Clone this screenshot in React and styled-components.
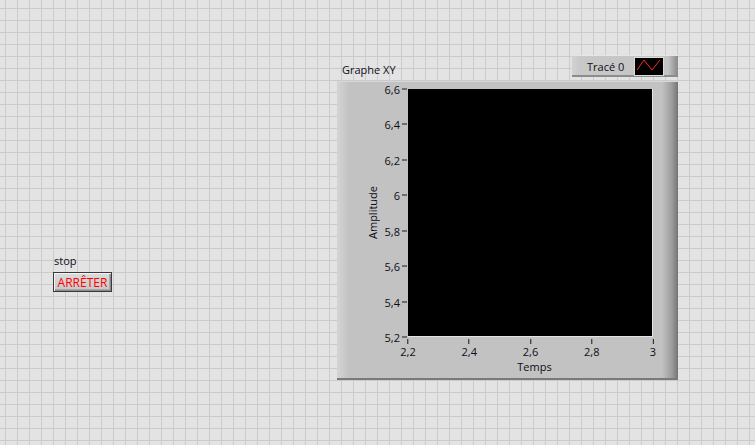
import React from "react";
import styled, { createGlobalStyle } from "styled-components";

const Global = createGlobalStyle`
  html, body { margin: 0; padding: 0; }
  body {
    background-color: #e3e3e3;
    background-image:
      linear-gradient(to right, #cbcbcb 1px, transparent 1px),
      linear-gradient(to bottom, #cbcbcb 1px, transparent 1px);
    background-size: 12px 12px;
    background-position: 5px 8px;
    font-family: "Open Sans", "Noto Sans", sans-serif;
    font-size: 11px;
    color: #0e0e18;
  }
`;

const Canvas = styled.div`
  position: relative;
  width: 755px;
  height: 445px;
  overflow: hidden;
`;

const Control = styled.div`
  position: absolute;
  left: ${(p) => p.$x}px;
  top: ${(p) => p.$y}px;
  display: flex;
  flex-direction: column;
`;

const Label = styled.div`
  line-height: 15px;
  white-space: nowrap;
  padding-left: ${(p) => p.$indent || 0}px;
`;

const StopButton = styled.button`
  box-sizing: border-box;
  width: 59px;
  height: 20px;
  margin-top: 4px;
  padding: 0;
  font-family: inherit;
  font-size: 12px;
  color: #ff0000;
  background: linear-gradient(to bottom, #dcdcdc, #c6c6c6);
  border: 1px solid #3a3a3a;
  box-shadow: inset 1px 1px 0 #f2f2f2, inset -1px -1px 0 #8a8a8a, inset -2px -2px 0 #a8a8a8;
  display: flex;
  align-items: center;
  justify-content: center;
`;

const GraphHeader = styled.div`
  display: flex;
  justify-content: space-between;
  align-items: flex-start;
  height: 26px;
  width: 341px;
`;

const GraphTitle = styled.div`
  margin-top: 7px;
  padding-left: 5px;
  line-height: 15px;
`;

const Legend = styled.div`
  box-sizing: border-box;
  width: 106px;
  height: 22px;
  display: flex;
  align-items: center;
  justify-content: space-between;
  padding: 0 15px 0 15px;
  background: linear-gradient(to right, #d2d2d2 0, #c8c8c8 8px, #c4c4c4 calc(100% - 10px), #8e8e8e calc(100% - 1px));
  box-shadow: inset 0 1px 0 #e6e6e6, inset 0 -2px 0 #8c8c8c;
`;

const Swatch = styled.svg`
  display: block;
  width: 28px;
  height: 17px;
  background: #000;
  box-shadow: 0 0 0 1px #dcdcdc;
`;

const Frame = styled.div`
  box-sizing: border-box;
  width: 341px;
  height: 299px;
  display: grid;
  grid-template-columns: 71px 245px 25px;
  grid-template-rows: 8px 248px 43px;
  background: linear-gradient(to right, #d4d4d4 0, #cacaca 7px, #c2c2c2 12px, #c2c2c2 calc(100% - 16px), #9c9c9c calc(100% - 6px), #747474 100%);
  box-shadow: inset 0 1px 0 #d8d8d8, inset 0 -2px 0 #7a7a7a;
`;

const YAxis = styled.div`
  grid-column: 1;
  grid-row: 2;
  display: flex;
`;

const YTitle = styled.div`
  width: 14px;
  margin-left: 29px;
  display: flex;
  align-items: center;
  justify-content: center;
  writing-mode: vertical-rl;
  transform: rotate(180deg);
  line-height: 14px;
`;

const YTicks = styled.div`
  position: relative;
  flex: 1;
`;

const YTick = styled.div`
  position: absolute;
  right: 1px;
  transform: translateY(-50%);
  display: flex;
  align-items: center;
  gap: 2px;
  line-height: 15px;
  &::after {
    content: "";
    width: 5px;
    height: 1px;
    background: #1a1a1a;
  }
`;

const Plot = styled.div`
  grid-column: 2;
  grid-row: 2;
  background: #000;
  box-shadow: inset -1px -1px 0 #e4e4e4;
`;

const XAxis = styled.div`
  grid-column: 2;
  grid-row: 3;
  display: flex;
  flex-direction: column;
`;

const XTicks = styled.div`
  position: relative;
  height: 24px;
`;

const XTick = styled.div`
  position: absolute;
  top: 2px;
  transform: translateX(-50%);
  display: flex;
  flex-direction: column;
  align-items: center;
  line-height: 15px;
  &::before {
    content: "";
    width: 1px;
    height: 5px;
    background: #1a1a1a;
  }
`;

const XTitle = styled.div`
  text-align: center;
  line-height: 15px;
  margin-top: -2px;
  padding-left: 8px;
`;

const fmt = (tenths) =>
  tenths % 10 === 0 ? String(tenths / 10) : (tenths / 10).toFixed(1).replace(".", ",");

const yValues = [66, 64, 62, 60, 58, 56, 54, 52];
const xValues = [22, 24, 26, 28, 30];

export default function App() {
  return (
    <>
      <Global />
      <Canvas>
        <Control $x={53} $y={253}>
          <Label $indent={1}>stop</Label>
          <StopButton>ARRÊTER</StopButton>
        </Control>

        <Control $x={337} $y={55}>
          <GraphHeader>
            <GraphTitle>Graphe XY</GraphTitle>
            <Legend>
              <span>Tracé 0</span>
              <Swatch viewBox="0 0 28 17">
                <polyline points="2,12 9,2 17,12 25,2" fill="none" stroke="#ff2a2a" strokeWidth="1" />
              </Swatch>
            </Legend>
          </GraphHeader>
          <Frame>
            <YAxis>
              <YTitle>Amplitude</YTitle>
              <YTicks>
                {yValues.map((v) => (
                  <YTick key={v} style={{ top: `${((66 - v) / 14) * 100}%` }}>
                    {fmt(v)}
                  </YTick>
                ))}
              </YTicks>
            </YAxis>
            <Plot />
            <XAxis>
              <XTicks>
                {xValues.map((v) => (
                  <XTick key={v} style={{ left: `${((v - 22) / 8) * 100}%` }}>
                    {fmt(v)}
                  </XTick>
                ))}
              </XTicks>
              <XTitle>Temps</XTitle>
            </XAxis>
          </Frame>
        </Control>
      </Canvas>
    </>
  );
}
